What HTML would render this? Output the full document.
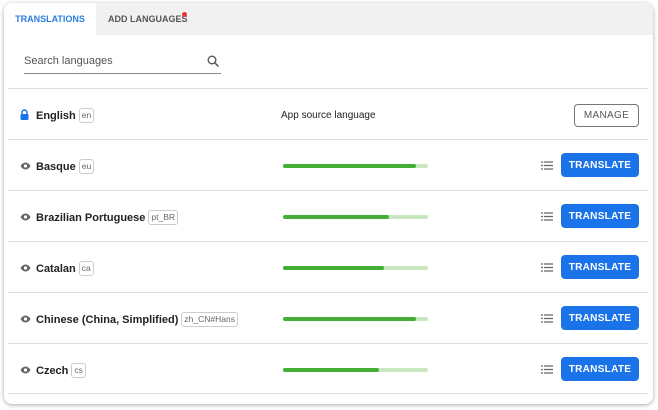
<!DOCTYPE html>
<html><head><style>
*{box-sizing:border-box;margin:0;padding:0}
body{width:658px;height:410px;background:#fff;font-family:"Liberation Sans",sans-serif;position:relative;overflow:hidden}
.card{position:absolute;left:4px;top:3px;width:649px;height:401px;background:#fff;border-radius:8px;box-shadow:0 1px 4px rgba(0,0,0,.35);overflow:hidden}
.tabs{height:32px;background:#f1f1f1;position:relative}
.tab{position:absolute;top:0;height:32px;line-height:32px;font-size:9px;font-weight:bold;color:#555}
.t1{left:0;width:92px;background:#fff;color:#2a7de1;text-align:center}
.t2{left:104px}
.dot{position:absolute;top:9px;width:5px;height:5px;border-radius:50%;background:#e53935}
.search{position:absolute;left:20px;top:46px;width:197px;height:25px;border-bottom:1px solid #888;font-size:11px;color:#555;line-height:25px}
.row{position:absolute;left:4px;width:640px;height:51px;border-top:1px solid #ddd}
.name{position:absolute;left:28px;top:2px;line-height:50px;font-size:11px;font-weight:bold;color:#222}
.code{display:inline-block;font-weight:normal;font-size:8.5px;color:#666;border:1px solid #ccc;border-radius:3px;padding:1px 2px;margin-left:3px;vertical-align:1px;line-height:11px}
.ic{position:absolute;left:12px;top:22px}
.bar{position:absolute;left:275px;top:24px;width:145px;height:4px;background:#c8e6c0;border-radius:2px}
.bar i{display:block;height:4px;background:#43ad35;border-radius:2px}
.btn{position:absolute;left:553px;top:13px;width:78px;height:24px;background:#1a73e8;border-radius:4px;color:#fff;font-size:10px;font-weight:bold;display:flex;align-items:center;justify-content:center;letter-spacing:.3px}
.list{position:absolute;left:533px;top:21px}
</style></head><body>
<div class="card">
<div class="tabs"><div class="tab t1">TRANSLATIONS</div><div class="tab t2">ADD LANGUAGES</div><div class="dot" style="left:178px"></div></div>
<div class="search">Search languages
<svg style="position:absolute;right:2px;top:6px" width="12" height="12" viewBox="0 0 12 12"><circle cx="5" cy="5" r="3.8" fill="none" stroke="#555" stroke-width="1.4"/><path d="M7.8 7.8L11.5 11.5" stroke="#555" stroke-width="1.5"/></svg></div>

<div class="row" style="top:85px">
<svg class="ic" style="top:20px" width="9" height="11" viewBox="0 0 9 11"><path d="M2 5V3.5a2.5 2.5 0 0 1 5 0V5" fill="none" stroke="#1a73e8" stroke-width="1.4"/><rect x="0.5" y="5" width="8" height="6" rx="1" fill="#1a73e8"/></svg>
<div class="name">English<span class="code">en</span></div>
<div style="position:absolute;left:273px;top:2px;line-height:50px;font-size:10px;color:#222">App source language</div>
<div style="position:absolute;left:566px;top:15px;width:65px;height:23px;border:1px solid #777;border-radius:4px;font-size:10px;color:#555;display:flex;align-items:center;justify-content:center;letter-spacing:.3px">MANAGE</div>
</div>

<div class="row" style="top:136px"><svg class="ic" width="11" height="8" viewBox="0 0 11 8"><path d="M0.5 4C2 1.5 4 .5 5.5 .5S9 1.5 10.5 4C9 6.5 7 7.5 5.5 7.5S2 6.5 .5 4z" fill="#666"/><circle cx="5.5" cy="4" r="1.6" fill="#fff"/></svg>
<div class="name">Basque<span class="code">eu</span></div><div class="bar"><i style="width:133px"></i></div>
<svg class="list" width="12" height="9" viewBox="0 0 12 9"><path d="M0 1h2M3 1h9M0 4.5h2M3 4.5h9M0 8h2M3 8h9" stroke="#666" stroke-width="1.3"/></svg><div class="btn">TRANSLATE</div></div>

<div class="row" style="top:187px"><svg class="ic" width="11" height="8" viewBox="0 0 11 8"><path d="M0.5 4C2 1.5 4 .5 5.5 .5S9 1.5 10.5 4C9 6.5 7 7.5 5.5 7.5S2 6.5 .5 4z" fill="#666"/><circle cx="5.5" cy="4" r="1.6" fill="#fff"/></svg>
<div class="name">Brazilian Portuguese<span class="code">pt_BR</span></div><div class="bar"><i style="width:106px"></i></div>
<svg class="list" width="12" height="9" viewBox="0 0 12 9"><path d="M0 1h2M3 1h9M0 4.5h2M3 4.5h9M0 8h2M3 8h9" stroke="#666" stroke-width="1.3"/></svg><div class="btn">TRANSLATE</div></div>

<div class="row" style="top:238px"><svg class="ic" width="11" height="8" viewBox="0 0 11 8"><path d="M0.5 4C2 1.5 4 .5 5.5 .5S9 1.5 10.5 4C9 6.5 7 7.5 5.5 7.5S2 6.5 .5 4z" fill="#666"/><circle cx="5.5" cy="4" r="1.6" fill="#fff"/></svg>
<div class="name">Catalan<span class="code">ca</span></div><div class="bar"><i style="width:101px"></i></div>
<svg class="list" width="12" height="9" viewBox="0 0 12 9"><path d="M0 1h2M3 1h9M0 4.5h2M3 4.5h9M0 8h2M3 8h9" stroke="#666" stroke-width="1.3"/></svg><div class="btn">TRANSLATE</div></div>

<div class="row" style="top:289px"><svg class="ic" width="11" height="8" viewBox="0 0 11 8"><path d="M0.5 4C2 1.5 4 .5 5.5 .5S9 1.5 10.5 4C9 6.5 7 7.5 5.5 7.5S2 6.5 .5 4z" fill="#666"/><circle cx="5.5" cy="4" r="1.6" fill="#fff"/></svg>
<div class="name">Chinese (China, Simplified)<span class="code">zh_CN#Hans</span></div><div class="bar"><i style="width:133px"></i></div>
<svg class="list" width="12" height="9" viewBox="0 0 12 9"><path d="M0 1h2M3 1h9M0 4.5h2M3 4.5h9M0 8h2M3 8h9" stroke="#666" stroke-width="1.3"/></svg><div class="btn">TRANSLATE</div></div>

<div class="row" style="top:340px;border-bottom:1px solid #ddd"><svg class="ic" width="11" height="8" viewBox="0 0 11 8"><path d="M0.5 4C2 1.5 4 .5 5.5 .5S9 1.5 10.5 4C9 6.5 7 7.5 5.5 7.5S2 6.5 .5 4z" fill="#666"/><circle cx="5.5" cy="4" r="1.6" fill="#fff"/></svg>
<div class="name">Czech<span class="code">cs</span></div><div class="bar"><i style="width:96px"></i></div>
<svg class="list" width="12" height="9" viewBox="0 0 12 9"><path d="M0 1h2M3 1h9M0 4.5h2M3 4.5h9M0 8h2M3 8h9" stroke="#666" stroke-width="1.3"/></svg><div class="btn">TRANSLATE</div></div>
</div>
</body></html>
